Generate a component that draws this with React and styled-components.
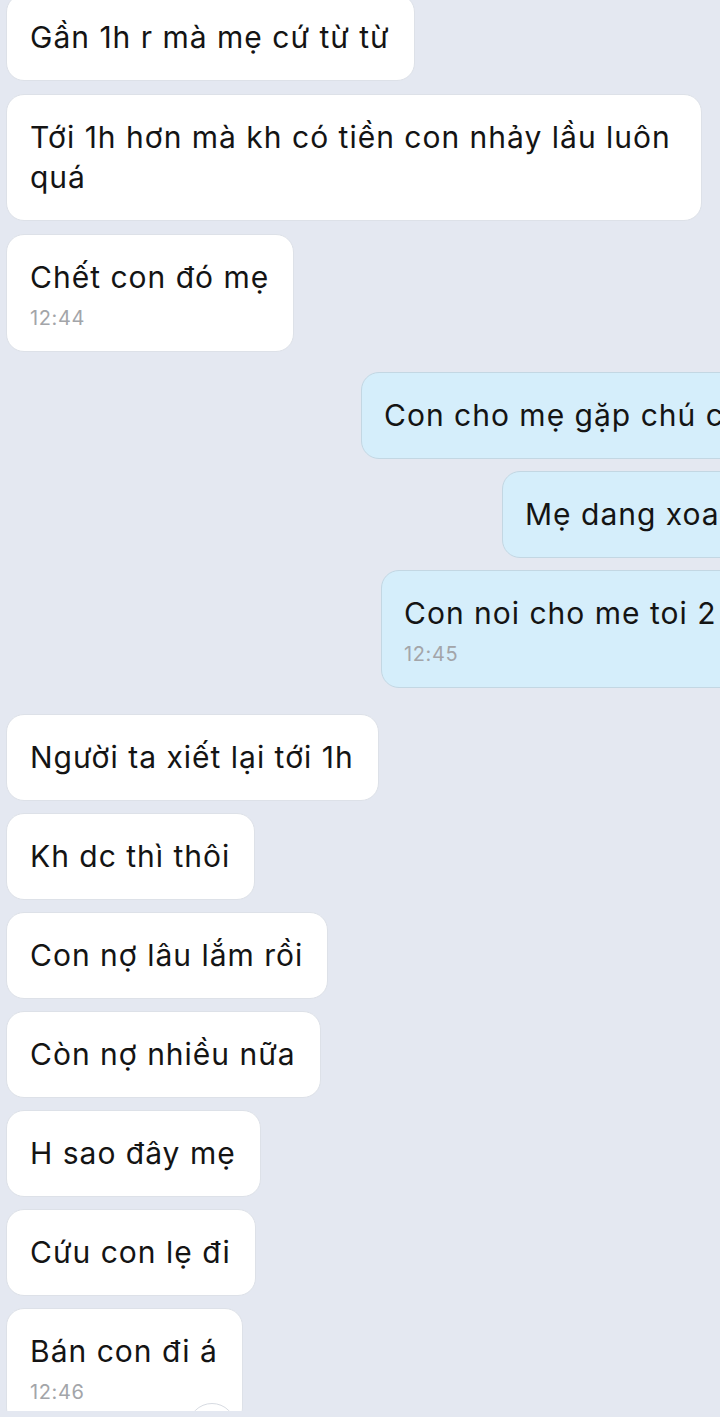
import React from 'react'
import styled, { createGlobalStyle, css } from 'styled-components'

const GlobalStyle = createGlobalStyle`
	html, body {
		margin: 0;
		background: #e4e8f1;
		overflow: hidden;
	}
	body {
		font-family: Inter, "Noto Sans", "Liberation Sans", sans-serif;
		-webkit-font-smoothing: antialiased;
	}
`

const Thread = styled.div`
	width: 720px;
	height: 1417px;
	overflow: hidden;
	display: flex;
	flex-direction: column;
	gap: 20px;
	padding: 0 6px;
	box-sizing: border-box;
	margin-top: -6px;
`

const Group = styled.div`
	display: flex;
	flex-direction: column;
	align-items: flex-start;
	gap: ${p => p.$gap}px;
	margin-top: ${p => p.$offset || 0}px;
`

const Bubble = styled.div`
	position: relative;
	box-sizing: border-box;
	max-width: 696px;
	padding: 22px 24px 23px 23px;
	border-radius: 18px;
	font-size: 30px;
	line-height: 40px;
	letter-spacing: 1px;
	color: #141414;
	background: #ffffff;
	border: 1px solid #dde1e8;

	${p => p.$out && css`
		background: #d5eefb;
		border-color: #c3d7e3;
		white-space: nowrap;
		margin-left: ${p.$indent}px;
		margin-right: -80px;
		padding-left: 22px;
	`}
`

const Time = styled.div`
	margin-top: 11px;
	font-size: 20px;
	line-height: 20px;
	letter-spacing: 0.6px;
	color: #a3a5a9;
`

const Reaction = styled.span`
	position: absolute;
	left: 181px;
	top: 94px;
	width: 46px;
	height: 46px;
	border-radius: 50%;
	background: #ffffff;
	border: 1px solid #d7dbe2;
`

const first = [
	{ text: 'Gần 1h r mà mẹ cứ từ từ' },
	{ text: 'Tới 1h hơn mà kh có tiền con nhảy lầu luôn quá' },
	{ text: 'Chết con đó mẹ', time: '12:44' }
]

const mine = [
	{ text: 'Con cho mẹ gặp chú c', indent: 355 },
	{ text: 'Mẹ dang xoa', indent: 496 },
	{ text: 'Con noi cho me toi 2', time: '12:45', indent: 375 }
]

const second = [
	{ text: 'Người ta xiết lại tới 1h' },
	{ text: 'Kh dc thì thôi' },
	{ text: 'Con nợ lâu lắm rồi' },
	{ text: 'Còn nợ nhiều nữa' },
	{ text: 'H sao đây mẹ' },
	{ text: 'Cứu con lẹ đi' },
	{ text: 'Bán con đi á', time: '12:46', reaction: true }
]

const Message = ({ text, time, out, indent, reaction }) => (
	<Bubble $out={out} $indent={indent}>
		{text}
		{time && <Time>{time}</Time>}
		{reaction && <Reaction />}
	</Bubble>
)

const App = () => (
	<>
		<GlobalStyle />
		<Thread>
			<Group $gap={13}>
				{first.map((m, i) => (
					<Message key={`in-a-${i}`} {...m} />
				))}
			</Group>
			<Group $gap={12}>
				{mine.map((m, i) => (
					<Message key={`out-${i}`} out {...m} />
				))}
			</Group>
			<Group $gap={12} $offset={6}>
				{second.map((m, i) => (
					<Message key={`in-b-${i}`} {...m} />
				))}
			</Group>
		</Thread>
	</>
)

export default App
